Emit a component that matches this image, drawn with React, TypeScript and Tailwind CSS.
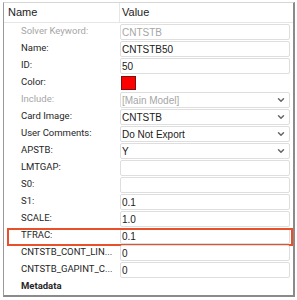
import { ChevronDown } from 'lucide-react'

type Row = {
  label: string
  value?: string
  kind: 'text' | 'select' | 'color' | 'none'
  muted?: boolean
  highlight?: boolean
  bold?: boolean
}

const rows: Row[] = [
  { label: 'Solver Keyword:', value: 'CNTSTB', kind: 'text', muted: true },
  { label: 'Name:', value: 'CNTSTB50', kind: 'text' },
  { label: 'ID:', value: '50', kind: 'text' },
  { label: 'Color:', kind: 'color' },
  { label: 'Include:', value: '[Main Model]', kind: 'select', muted: true },
  { label: 'Card Image:', value: 'CNTSTB', kind: 'select' },
  { label: 'User Comments:', value: 'Do Not Export', kind: 'select' },
  { label: 'APSTB:', value: 'Y', kind: 'select' },
  { label: 'LMTGAP:', value: '', kind: 'text' },
  { label: 'S0:', value: '', kind: 'text' },
  { label: 'S1:', value: '0.1', kind: 'text' },
  { label: 'SCALE:', value: '1.0', kind: 'text' },
  { label: 'TFRAC:', value: '0.1', kind: 'text', highlight: true },
  { label: 'CNTSTB_CONT_LIN...', value: '0', kind: 'text' },
  { label: 'CNTSTB_GAPINT_C...', value: '0', kind: 'text' },
  { label: 'Metadata', kind: 'none', bold: true },
]

function ValueCell({ row }: { row: Row }) {
  if (row.kind === 'none') return null
  if (row.kind === 'color') {
    return (
      <div className="flex h-full items-center pl-[1px]">
        <div className="h-[14px] w-[15px] border border-[#7a1010] bg-[#ff0000]" />
      </div>
    )
  }
  return (
    <div className="flex h-[16px] w-[170px] items-center rounded-[2px] border border-[#dedede] bg-white pl-[1px] pr-[3px]">
      <span className={`flex-1 whitespace-nowrap ${row.muted ? 'text-[#a6a6a6]' : 'text-[#1a1a1a]'}`}>{row.value}</span>
      {row.kind === 'select' && <ChevronDown size={10} strokeWidth={3.5} className="text-[#666]" />}
    </div>
  )
}

export default function App() {
  return (
    <div className="h-[300px] w-[297px] bg-white pl-[3px] pt-[2px] font-['Liberation_Sans',Arial,sans-serif]">
      <div className="h-[295px] w-[292px] border-b-2 border-l border-r-2 border-t border-b-[#8a8a8a] border-l-[#9a9a9a] border-r-[#8a8a8a] border-t-[#d6d6d6] bg-white">
        <div className="flex h-[20px] items-center border-b border-[#e6e6e6] text-[11px] text-[#222]">
          <div className="flex h-full w-[116px] items-center border-r border-[#e6e6e6] pl-[4px]">Name</div>
          <div className="pl-[2px]">Value</div>
        </div>
        {rows.map((row) => (
          <div key={row.label} className="relative flex h-[17px] items-center text-[10px]">
            <div
              className={`w-[116px] overflow-hidden whitespace-nowrap pl-[17px] font-['Roboto',Arial,sans-serif] text-[9.5px] ${
                row.muted ? 'text-[#a6a6a6]' : 'text-[#262626]'
              } ${row.bold ? 'font-bold' : ''}`}
            >
              {row.label}
            </div>
            <div className="h-full pt-[1px]">
              <ValueCell row={row} />
            </div>
            {row.highlight && (
              <div className="absolute left-[3px] right-0 top-[1px] h-[18px] border-2 border-[#e8502a]" />
            )}
          </div>
        ))}
      </div>
    </div>
  )
}
